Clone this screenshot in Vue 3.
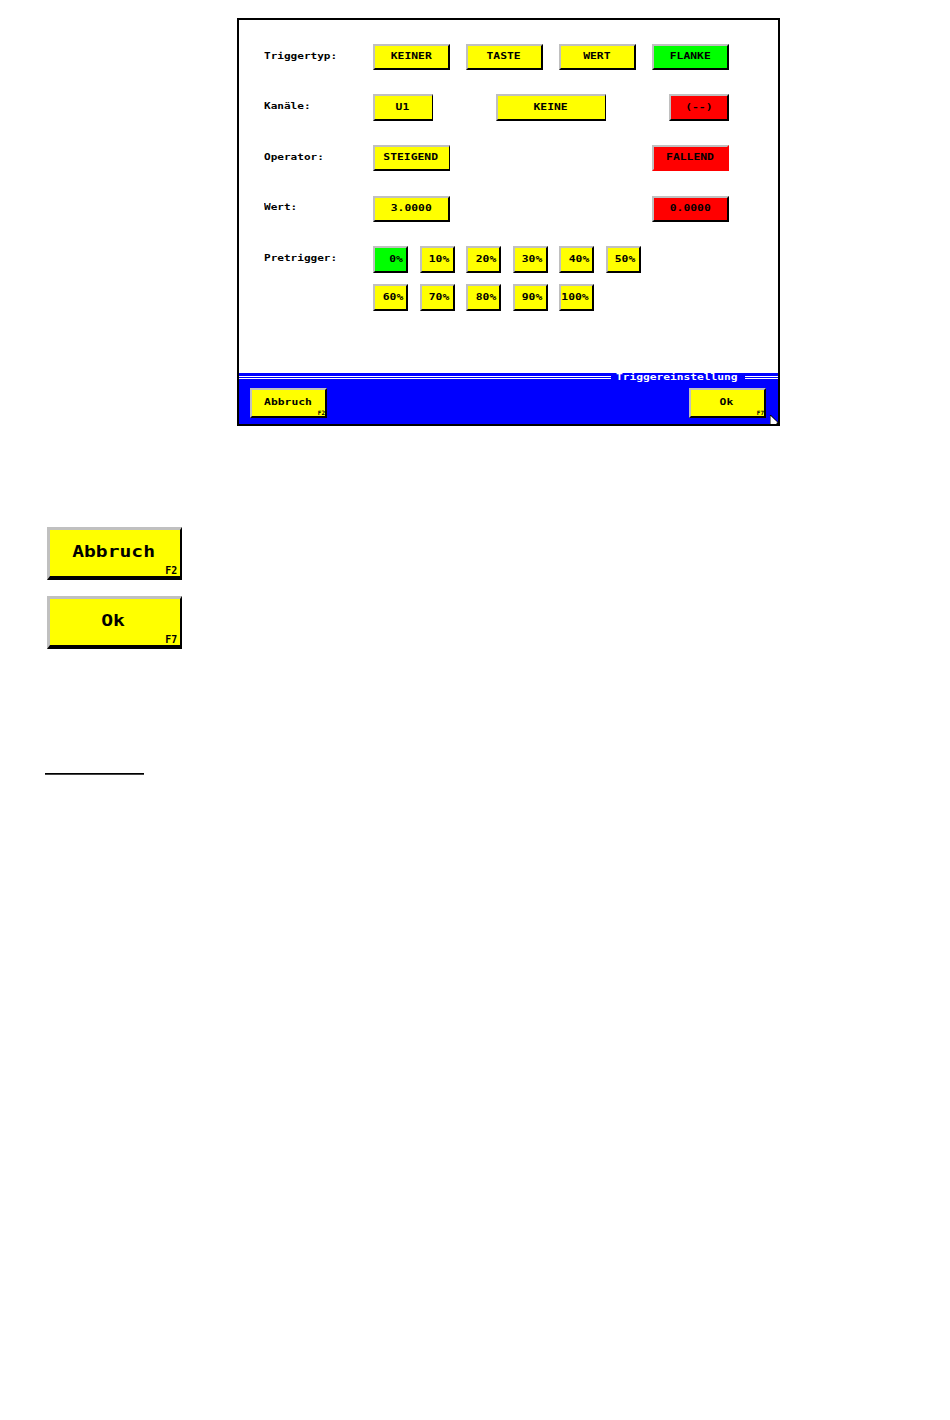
<script setup>
import { ref } from 'vue'

const triggerTypes = ref([
  { text: 'KEINER' },
  { text: 'TASTE' },
  { text: 'WERT' },
  { text: 'FLANKE', color: 'green' },
])

const pretrigger = ref([
  ['0%', '10%', '20%', '30%', '40%', '50%'],
  ['60%', '70%', '80%', '90%', '100%'],
])

const selected = ref('0%')

const keys = ref([
  { text: 'Abbruch', key: 'F2' },
  { text: 'Ok', key: 'F7' },
])
</script>

<template>
  <main class="page">
    <section class="panel">
      <div class="settings">
        <div class="row">
          <div class="label"><span>Triggertyp:</span></div>
          <div class="fields">
            <button v-for="item in triggerTypes" :key="item.text" class="btn" :class="item.color">
              <span>{{ item.text }}</span>
            </button>
          </div>
        </div>

        <div class="row">
          <div class="label"><span>Kanäle:</span></div>
          <div class="fields">
            <button class="btn tall small thin"><span>U1</span></button>
            <button class="btn tall wide thin"><span>KEINE</span></button>
            <button class="btn tall small red"><span>(--)</span></button>
          </div>
        </div>

        <div class="row">
          <div class="label"><span>Operator:</span></div>
          <div class="fields">
            <button class="btn thin"><span>STEIGEND</span></button>
            <button class="btn red flat"><span>FALLEND</span></button>
          </div>
        </div>

        <div class="row">
          <div class="label"><span>Wert:</span></div>
          <div class="fields">
            <button class="btn"><span>3.0000</span></button>
            <button class="btn red"><span>0.0000</span></button>
          </div>
        </div>

        <div class="row">
          <div class="label"><span>Pretrigger:</span></div>
          <div class="percent-list">
            <div v-for="(line, index) in pretrigger" :key="index" class="percent-line">
              <button
                v-for="value in line"
                :key="value"
                class="btn percent"
                :class="{ green: selected === value }"
                @click="selected = value"
              >
                <span>{{ value }}</span>
              </button>
            </div>
          </div>
        </div>
      </div>

      <footer class="footer">
        <div class="title-line">
          <i class="rule"></i>
          <div class="title"><span>Triggereinstellung</span></div>
          <i class="rule short"></i>
        </div>
        <div class="footer-keys">
          <button v-for="item in keys" :key="item.key" class="btn fkey">
            <span>{{ item.text }}</span>
            <small>{{ item.key }}</small>
          </button>
        </div>
        <svg class="cursor" width="9" height="10" viewBox="0 0 9 10">
          <path d="M0 0 H1 L9 8 V10 H0 Z" fill="#000" />
          <path d="M0.5 0.8 L7.6 7.6 L6 8 L7 9 L0.5 9 Z" fill="#fff" />
        </svg>
      </footer>
    </section>

    <div class="big-keys">
      <button v-for="item in keys" :key="item.key" class="btn big">
        <span>{{ item.text }}</span>
        <small>{{ item.key }}</small>
      </button>
    </div>

    <div class="footnote-line"></div>
  </main>
</template>

<style>
body {
  margin: 0;
  background: #fff;
}
</style>

<style scoped>
.page {
  width: 950px;
  height: 1420px;
  box-sizing: border-box;
  padding-top: 18px;
  overflow: hidden;
  background: #fff;
  color: #000;
  font-family: "DejaVu Sans Mono", monospace;
}

.panel {
  box-sizing: border-box;
  width: 543px;
  height: 408px;
  margin-left: 237px;
  border: 2px solid #000;
  display: flex;
  flex-direction: column;
}

.settings {
  flex: 1;
  padding: 24px 49px 0 25px;
}

.row {
  display: flex;
  height: 50.6px;
}

.label {
  width: 109px;
  height: 23px;
  display: flex;
  align-items: center;
  font-size: 8.5px;
  line-height: 10px;
  font-weight: bold;
}

.label span {
  display: inline-block;
  transform: scaleX(1.3);
  transform-origin: left;
}

.fields {
  flex: 1;
  display: flex;
  justify-content: space-between;
  align-items: flex-start;
}

.btn {
  position: relative;
  box-sizing: border-box;
  width: 77px;
  height: 26px;
  padding: 0 1px 2px 0;
  border-style: solid;
  border-width: 2px;
  border-color: #c0c0c0 #000 #000 #c0c0c0;
  border-radius: 0;
  background: #ff0;
  color: #000;
  display: flex;
  align-items: center;
  justify-content: center;
  font-family: inherit;
  font-size: 9px;
  line-height: 10px;
  font-weight: bold;
}

.btn span {
  display: inline-block;
  transform: scaleX(1.26);
}

.thin {
  border-right-width: 1px;
  padding-right: 2px;
}

.tall {
  height: 27px;
  margin-top: -1px;
  padding-bottom: 0;
}

.small {
  width: 60px;
}

.wide {
  width: 110px;
}

.green {
  background: #0f0;
}

.red {
  background: #f00;
}

.flat {
  border-right-color: #f00;
  border-bottom-color: #f00;
}

.percent-list {
  display: flex;
  flex-direction: column;
  gap: 11px;
}

.percent-line {
  display: flex;
  gap: 11.5px;
}

.percent {
  width: 35px;
  height: 27px;
  padding: 0 3px 1px 0;
  justify-content: flex-end;
}

.percent span {
  transform-origin: right;
}

.footer {
  position: relative;
  height: 51px;
  background: #00f;
}

.title-line {
  display: flex;
  height: 9px;
}

.rule {
  width: 372px;
  height: 1px;
  margin-top: 3px;
  border-top: 1px solid #fff;
  border-bottom: 1px solid #fff;
}

.short {
  width: 33px;
}

.title {
  width: 134px;
  padding-left: 5px;
  box-sizing: border-box;
  color: #fff;
  font-size: 8.5px;
  line-height: 9px;
  font-weight: bold;
}

.title span {
  display: inline-block;
  transform: scaleX(1.32);
  transform-origin: left;
}

.footer-keys {
  display: flex;
  justify-content: space-between;
  padding: 6px 12px 0 11px;
}

.fkey {
  height: 30px;
  padding-right: 2px;
}

.fkey small {
  position: absolute;
  right: 0;
  bottom: 0;
  font-size: 6px;
  line-height: 6px;
}

.cursor {
  position: absolute;
  right: -1px;
  bottom: -1px;
}

.big-keys {
  display: flex;
  flex-direction: column;
  gap: 16px;
  margin: 101px 0 0 47px;
}

.big {
  width: 135px;
  height: 53px;
  border-width: 3px 2px 4px 3px;
  padding: 0 3px 2px 0;
  font-size: 15px;
  line-height: 16px;
}

.big span {
  transform: scaleX(1.31);
}

.big small {
  position: absolute;
  right: 3px;
  bottom: 0;
  font-size: 11px;
  line-height: 10px;
  transform: scaleX(0.9);
  transform-origin: right;
}

.footnote-line {
  width: 99px;
  height: 1px;
  margin: 124px 0 0 45px;
  background: #000;
  border-bottom: 1px solid #444;
}
</style>
